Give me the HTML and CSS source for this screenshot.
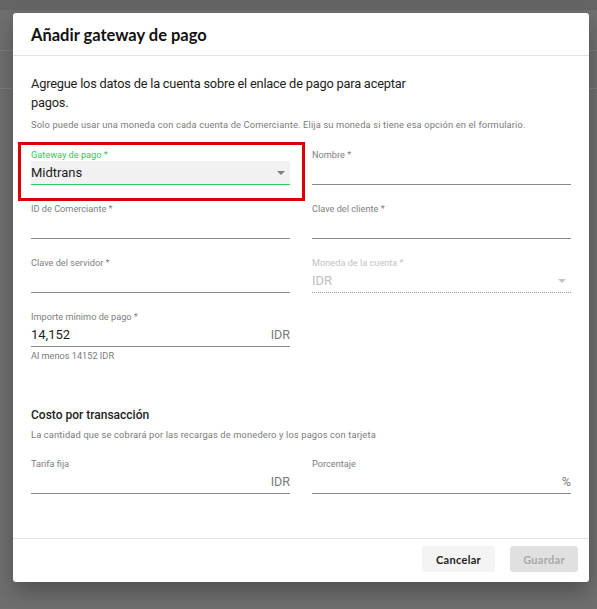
FILE: index.html
```html
<!DOCTYPE html>
<html lang="es">
<head>
<meta charset="utf-8">
<link rel="stylesheet" href="styles.css">
</head>
<body>
<div class="backdrop">
  <div class="bg-line l1"></div>
  <div class="bg-line l2"></div>
</div>
<div class="dialog">
  <div class="dialog-header">Añadir gateway de pago</div>
  <div class="dialog-body">
    <p class="intro">Agregue los datos de la cuenta sobre el enlace de pago para aceptar pagos.</p>
    <p class="note">Solo puede usar una moneda con cada cuenta de Comerciante. Elija su moneda si tiene esa opción en el formulario.</p>
    <div class="grid">
      <div class="field focused">
        <div class="highlight"></div>
        <label class="label">Gateway de pago *</label>
        <div class="control select filled"><span class="value">Midtrans</span><span class="arrow"></span></div>
      </div>
      <div class="field">
        <label class="label">Nombre *</label>
        <div class="control"></div>
      </div>
      <div class="field">
        <label class="label">ID de Comerciante *</label>
        <div class="control"></div>
      </div>
      <div class="field">
        <label class="label">Clave del cliente *</label>
        <div class="control"></div>
      </div>
      <div class="field">
        <label class="label">Clave del servidor *</label>
        <div class="control"></div>
      </div>
      <div class="field disabled">
        <label class="label">Moneda de la cuenta *</label>
        <div class="control select"><span class="value">IDR</span><span class="arrow"></span></div>
      </div>
      <div class="field">
        <label class="label">Importe mínimo de pago *</label>
        <div class="control"><span class="value">14,152</span><span class="suffix">IDR</span></div>
        <div class="helper">Al menos 14152 IDR</div>
      </div>
    </div>
    <h3 class="section-title">Costo por transacción</h3>
    <p class="note section-note">La cantidad que se cobrará por las recargas de monedero y los pagos con tarjeta</p>
    <div class="grid">
      <div class="field">
        <label class="label">Tarifa fija</label>
        <div class="control"><span class="value"></span><span class="suffix">IDR</span></div>
      </div>
      <div class="field">
        <label class="label">Porcentaje</label>
        <div class="control"><span class="value"></span><span class="suffix">%</span></div>
      </div>
    </div>
  </div>
  <div class="dialog-footer">
    <button class="btn btn-cancel">Cancelar</button>
    <button class="btn btn-save">Guardar</button>
  </div>
</div>
</body>
</html>
```
FILE: styles.css
```css
* { box-sizing: border-box; }
html, body { margin: 0; padding: 0; }
body {
  width: 597px;
  height: 609px;
  background: #6f6f6f;
  font-family: Roboto, "Liberation Sans", sans-serif;
  padding: 13px 8px 0 13px;
  position: relative;
  overflow: hidden;
}
.backdrop { position: absolute; inset: 0; }
.backdrop::before {
  content: "";
  position: absolute;
  left: 0; right: 0; top: 0; height: 10px;
  background: #656565;
}
.bg-line { position: absolute; left: 0; right: 0; height: 1px; background: #7c7c7c; }
.l1 { top: 50px; }
.l2 { top: 88px; }

.dialog {
  position: relative;
  width: 576px;
  height: 569px;
  background: #fff;
  border-radius: 3px;
  box-shadow: 0 10px 22px rgba(0,0,0,0.28);
  display: flex;
  flex-direction: column;
}
.dialog-header {
  height: 43px;
  padding: 12px 18px 0;
  font-family: Lato, "Noto Sans", sans-serif;
  font-weight: 700;
  font-size: 16.5px;
  color: #111;
  border-bottom: 1px solid #e2e2e2;
}
.dialog-body {
  flex: 1;
  padding: 18px 18px 0;
}
.intro {
  margin: 0;
  max-width: 400px;
  font-size: 12.8px;
  letter-spacing: -0.2px;
  line-height: 19px;
  color: #1d1d1d;
}
.note {
  margin: 6px 0 0;
  font-size: 9.3px;
  line-height: 14px;
  letter-spacing: 0.15px;
  color: #7a7a7a;
}
.grid {
  margin-top: 17px;
  display: grid;
  grid-template-columns: 259px 259px;
  column-gap: 22px;
  row-gap: 18px;
  align-items: start;
}
.field { position: relative; }
.label {
  display: block;
  font-size: 9.2px;
  line-height: 12px;
  color: #808080;
}
.control {
  height: 24px;
  border-bottom: 1px solid #8a8a8a;
  display: flex;
  align-items: center;
  font-size: 13px;
  color: #1d1d1d;
}
.control .value { flex: 1; }
.control .suffix { color: #7a7a7a; font-size: 12.5px; }
.select .arrow {
  width: 0; height: 0;
  margin-right: 5px;
  border-left: 4px solid transparent;
  border-right: 4px solid transparent;
  border-top: 4px solid #7d7d7d;
}
.filled { background: #f1f1f1; }
.focused .label { color: #2fcc5a; }
.focused .control { border-bottom-color: #2fcc5a; }
.disabled .label { color: #c4c4c4; }
.disabled .control { border-bottom: 1px dotted #9a9a9a; color: #bdbdbd; }
.disabled .arrow { border-top-color: #c4c4c4; }
.helper {
  margin-top: 3px;
  font-size: 9.2px;
  line-height: 12px;
  color: #7a7a7a;
}
.highlight {
  position: absolute;
  left: -13px; right: -15px; top: -7px; bottom: -16px;
  border: 3px solid #dd0000;
}
.section-title {
  margin: 45px 0 0;
  font-size: 12px;
  font-weight: 500;
  line-height: 16px;
  color: #1d1d1d;
}
.section-note { margin-top: 5px; }
.dialog-body .grid:last-child { margin-top: 16px; }

.dialog-footer {
  height: 44px;
  border-top: 1px solid #e2e2e2;
  display: flex;
  justify-content: flex-end;
  align-items: flex-start;
  gap: 15px;
  padding: 7px 11px 0 0;
}
.btn {
  height: 26px;
  border: none;
  border-radius: 3px;
  font-family: Lato, "Noto Sans", sans-serif;
  font-weight: 700;
  font-size: 11px;
  letter-spacing: 0.3px;
  padding: 0;
}
.btn-cancel { width: 73px; background: #f4f4f4; color: #1d1d1d; }
.btn-save { width: 68px; background: #e0e0e0; color: #a9a9a9; }
```
